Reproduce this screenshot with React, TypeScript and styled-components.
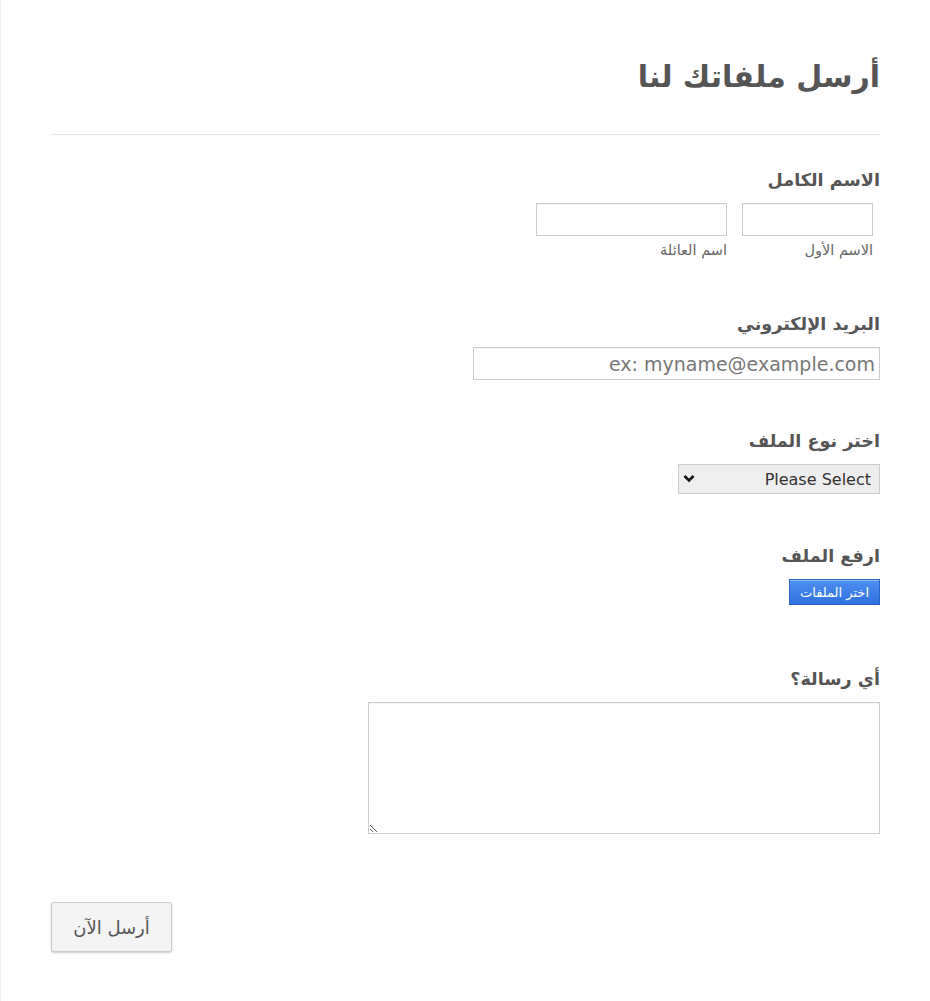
import React from "react";
import styled, { createGlobalStyle } from "styled-components";

const Global = createGlobalStyle`
  html, body { margin: 0; padding: 0; background: #fff; }
  body { font-family: "DejaVu Sans", Verdana, sans-serif; color: #555; }
  * { box-sizing: border-box; }
`;

const Page = styled.div`
  direction: rtl;
  min-height: 1001px;
  border-left: 1px solid #f1f1f1;
  padding: 0 50px 0 50px;
`;

const Header = styled.div`
  padding-top: 57px;
  padding-bottom: 37px;
  border-bottom: 1px solid #e6e6e6;
`;

const Title = styled.h1`
  margin: 0;
  font-size: 30px;
  line-height: 40px;
  font-weight: bold;
  color: #555;
`;

const Form = styled.form`
  display: flex;
  flex-direction: column;
`;

const Field = styled.div<{ $top: number }>`
  margin-top: ${(p) => p.$top}px;
  display: flex;
  flex-direction: column;
  align-items: flex-start;
`;

const Label = styled.label`
  font-size: 17.6px;
  font-weight: bold;
  line-height: 24px;
  color: #555;
  margin-bottom: 11px;
`;

const NameRow = styled.div`
  display: flex;
  gap: 15px;
  padding-inline-start: 7px;
`;

const NameCol = styled.div`
  display: flex;
  flex-direction: column;
`;

const TextInput = styled.input<{ $w: number }>`
  width: ${(p) => p.$w}px;
  height: 33px;
  border: 1px solid #ccc;
  box-shadow: inset 0 1px 1px rgba(0, 0, 0, 0.05);
  background: #fff;
  padding: 0 4px;
  font-family: "DejaVu Sans", Verdana, sans-serif;
  font-size: 19px;
  color: #555;
  outline: none;
  &::placeholder { color: #777; }
`;

const SubLabel = styled.span`
  font-size: 14.5px;
  line-height: 18px;
  color: #666;
  margin-top: 5px;
`;

const SelectWrap = styled.div`
  position: relative;
  width: 202px;
  height: 30px;
`;

const Select = styled.select`
  appearance: none;
  -webkit-appearance: none;
  width: 202px;
  height: 30px;
  border: 1px solid #ccc;
  background-color: #eee;
  font-family: "DejaVu Sans", Verdana, sans-serif;
  font-size: 16px;
  color: #333;
  padding: 0 8px 0 28px;
  border-radius: 0;
  outline: none;
`;

const Chevron = styled.svg`
  position: absolute;
  left: 5px;
  top: 10px;
  width: 12px;
  height: 9px;
  pointer-events: none;
`;

const FileButton = styled.button`
  width: 91px;
  height: 26px;
  border: 1px solid #2b63c4;
  background: linear-gradient(#4d8ff0, #2f72e0);
  color: #fff;
  font-family: "DejaVu Sans", Verdana, sans-serif;
  font-size: 13px;
  padding: 0;
  box-shadow: inset 0 1px 0 rgba(255, 255, 255, 0.4);
`;

const TextArea = styled.textarea`
  width: 512px;
  height: 132px;
  border: 1px solid #ccc;
  box-shadow: inset 0 1px 1px rgba(0, 0, 0, 0.05);
  font-family: "DejaVu Sans", Verdana, sans-serif;
  font-size: 15px;
  outline: none;
  direction: rtl;
`;

const Footer = styled.div`
  display: flex;
  justify-content: flex-end;
  margin-top: 68px;
`;

const SubmitButton = styled.button`
  width: 121px;
  height: 50px;
  background: #f4f4f4;
  border: 1px solid #ccc;
  border-radius: 3px;
  box-shadow: 0 1px 2px rgba(0, 0, 0, 0.2);
  font-family: "DejaVu Sans", Verdana, sans-serif;
  font-size: 18px;
  color: #555;
`;

export default function App() {
  return (
    <>
      <Global />
      <Page>
        <Header>
          <Title>أرسل ملفاتك لنا</Title>
        </Header>
        <Form onSubmit={(e) => e.preventDefault()}>
          <Field $top={33}>
            <Label>الاسم الكامل</Label>
            <NameRow>
              <NameCol>
                <TextInput $w={131} />
                <SubLabel>الاسم الأول</SubLabel>
              </NameCol>
              <NameCol>
                <TextInput $w={191} />
                <SubLabel>اسم العائلة</SubLabel>
              </NameCol>
            </NameRow>
          </Field>
          <Field $top={53}>
            <Label>البريد الإلكتروني</Label>
            <TextInput $w={407} placeholder="ex: myname@example.com" />
          </Field>
          <Field $top={49}>
            <Label>اختر نوع الملف</Label>
            <SelectWrap>
              <Select defaultValue="">
                <option value="">Please Select</option>
              </Select>
              <Chevron viewBox="0 0 12 9">
                <path d="M1.5 2 L6 6.5 L10.5 2" fill="none" stroke="#111" strokeWidth="2.6" />
              </Chevron>
            </SelectWrap>
          </Field>
          <Field $top={50}>
            <Label>ارفع الملف</Label>
            <FileButton type="button">اختر الملفات</FileButton>
          </Field>
          <Field $top={62}>
            <Label>أي رسالة؟</Label>
            <TextArea />
          </Field>
          <Footer>
            <SubmitButton type="submit">أرسل الآن</SubmitButton>
          </Footer>
        </Form>
      </Page>
    </>
  );
}
